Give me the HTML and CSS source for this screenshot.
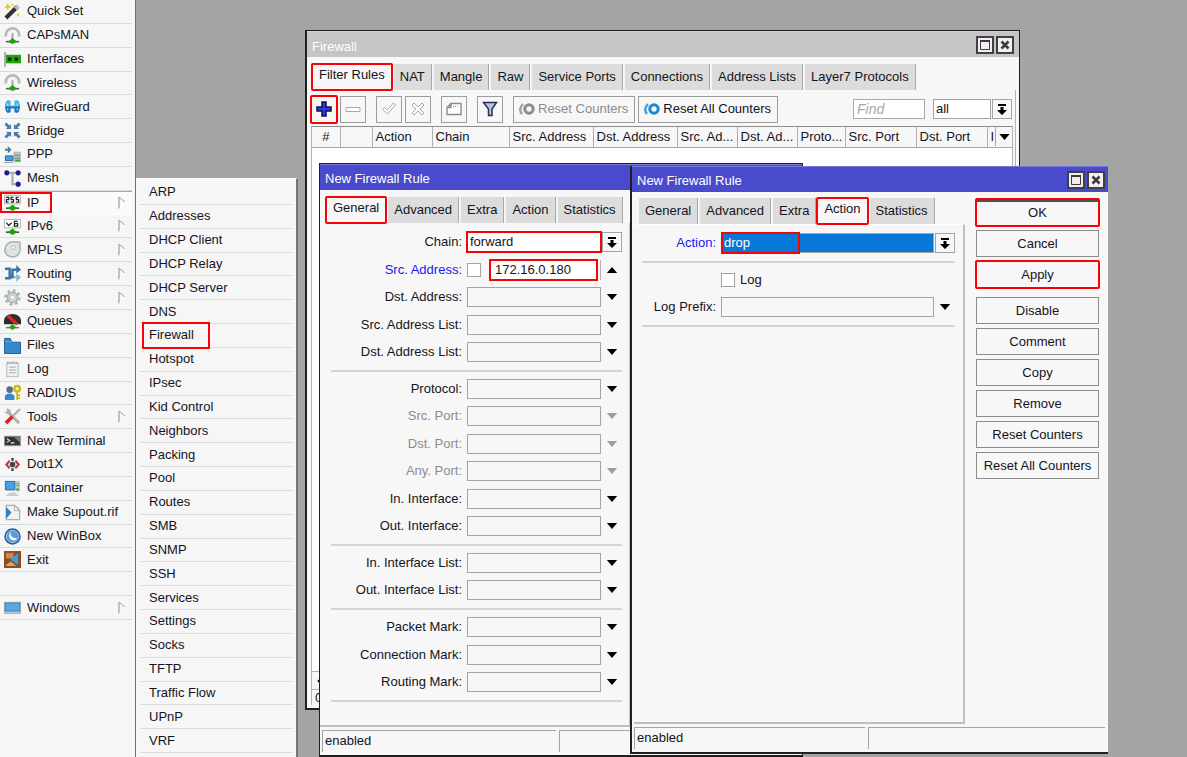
FILE: index.html
```html
<!DOCTYPE html>
<html lang="en">
<head>
<meta charset="utf-8">
<title>WinBox</title>
<link rel="stylesheet" href="styles.css">
</head>
<body>
<svg class="defs" aria-hidden="true">
  <symbol id="sub" viewBox="0 0 8 14"><path d="M1 13V1" stroke="#8c8c8c" fill="none"/><path d="M1 1l6 5" stroke="#a0a0a0" fill="none"/><path d="M7 6l-6 7" stroke="#fff" fill="none"/></symbol>
  <symbol id="down" viewBox="0 0 12 7"><path d="M0 0h12L6 7z" fill="currentColor"/></symbol>
  <symbol id="up" viewBox="0 0 12 7"><path d="M0 7h12L6 0z" fill="currentColor"/></symbol>
  <symbol id="pick" viewBox="0 0 10 11"><path d="M1 0h8v2H1zM3.500 3h3v3H10L5 11 0 6h3.500z" fill="currentColor"/></symbol>
  <symbol id="max" viewBox="0 0 10 10"><path d="M.5 1h9v8.500h-9z" fill="#f4ecf4" stroke="#3c3c3c"/><path d="M0 1h10" stroke="#3c3c3c" stroke-width="2"/></symbol>
  <symbol id="close" viewBox="0 0 10 10"><path d="M1.500 1.500l7 7M8.500 1.500l-7 7" stroke="#3c3c3c" stroke-width="2.600"/></symbol>
  <symbol id="antenna" viewBox="0 0 18 18"><path d="M2 10V8a7 6.500 0 0 1 14 0v2" fill="none" stroke="#b4bcb8" stroke-width="2.800"/><path d="M8 6h2l.5 8h-3z" fill="#a9b4ae"/><path d="M2 15.500h14" stroke="#555" stroke-width="1.600"/><path d="M9 12l5 3.500-5 2.500-5-2.500z" fill="#22a010"/></symbol>
  <symbol id="rings" viewBox="0 0 16 12"><path d="M4 1Q-1 6 3 11" fill="none" stroke="currentColor" stroke-width="2.400" opacity=".8"/><circle cx="10" cy="6" r="4.200" fill="none" stroke="currentColor" stroke-width="3"/></symbol>
</svg>

<nav class="sidebar" aria-label="Main menu">
  <ul class="menu">
    <li><a href="#"><svg viewBox="0 0 18 18"><path d="M2 16L14 4" stroke="#333" stroke-width="4.500"/><path d="M12 6l3-3" stroke="#b8bcbc" stroke-width="4"/><path d="M4 1v6M1 4h6M9 1v2M15 11v3" stroke="#d8cc10" stroke-width="1.800"/></svg>Quick Set</a></li>
    <li><a href="#"><svg><use href="#antenna"/></svg>CAPsMAN</a></li>
    <li><a href="#"><svg viewBox="0 0 18 18"><path d="M1 1v16" stroke="#a9b4ae" stroke-width="2"/><path d="M2 4h16v9H2z" fill="#22a010"/><path d="M4.500 7l3 3M7.500 7l-3 3M11.500 7l3 3M14.500 7l-3 3" stroke="#0c2c08" stroke-width="1.800"/><path d="M4 13.500h13" stroke="#d8cc10" stroke-dasharray="1 1"/></svg>Interfaces</a></li>
    <li><a href="#"><svg><use href="#antenna"/></svg>Wireless</a></li>
    <li><a href="#"><svg viewBox="0 0 18 18"><path d="M1 8l1-4 2-2 3 1v5h4V3l3-1 2 2 1 4v2H1z" fill="#48b8f0"/><path d="M1 9h16l-1 5-2 2-3-1v-4H7v4l-3 1-2-2z" fill="#2070bc"/><path d="M4 6v2M14 6v2M4 11v2M14 11v2" stroke="#d8ecfa" stroke-width="1.200"/></svg>WireGuard</a></li>
    <li><a href="#"><svg viewBox="0 0 18 18"><path d="M1.500 1.500L6 6M16.500 1.500L12 6M1.500 16.500L6 12M16.500 16.500L12 12" stroke="#4c7ca4" stroke-width="3"/><path d="M7.500 2v5.500H2zM10.500 2v5.500H16zM7.500 16v-5.500H2zM10.500 16v-5.500H16z" fill="#4c7ca4"/></svg>Bridge</a></li>
    <li><a href="#"><svg viewBox="0 0 18 18"><path d="M1 3h3V0l4 4-4 4V5H1z" fill="#4c7ca4"/><path d="M10 6h8v11h-8z" fill="#b8bebc"/><path d="M11 10h6M11 13h6" stroke="#7d8784"/><path d="M1.500 10.500h8v5h-8z" fill="#40a0e0" stroke="#286494"/><path d="M12 15.500h5" stroke="#30b020" stroke-width="2"/><path d="M0 17.500h10" stroke="#9aa2a0"/></svg>PPP</a></li>
    <li><a href="#"><svg viewBox="0 0 18 18"><path d="M3 3h12M9 3v12h6" fill="none" stroke="#a9b4ae" stroke-width="2.400"/><g fill="#201c90"><circle cx="3" cy="3" r="2.700"/><circle cx="15" cy="3" r="2.700"/><circle cx="15" cy="15" r="2.700"/></g></svg>Mesh</a></li>
    <li class="open"><a href="#"><svg viewBox="0 0 18 18"><path d="M.5 1.500h17v9H.5z" fill="#fff" stroke="#a9b4ae"/><path d="M2 3.500h3v2.500H2.500v2.500H5M10 3.500H7.500V6H10v2.500H7M15.500 3.500H13V6h2.500v2.500h-3" fill="none" stroke="#222" stroke-width="1.300"/><path d="M2 15h14" stroke="#444" stroke-width="1.600"/><path d="M9 11l5 4-5 3-5-3z" fill="#22a010"/></svg>IP<svg class="sub"><use href="#sub"/></svg></a></li>
    <li><a href="#"><svg viewBox="0 0 18 18"><path d="M.5 1.500h17v9H.5z" fill="#fff" stroke="#a9b4ae"/><path d="M2.500 5l2.500 3 3-3M14.500 3.500H11v5h3.500V6H11" fill="none" stroke="#222" stroke-width="1.300"/><path d="M2 15h14" stroke="#444" stroke-width="1.600"/><path d="M9 11l5 4-5 3-5-3z" fill="#22a010"/></svg>IPv6<svg class="sub"><use href="#sub"/></svg></a></li>
    <li><a href="#"><svg viewBox="0 0 18 18"><path d="M7 1h9q1 0 1 1v8q-2 7-8 7-8-1-8-8 1-6 6-8z" fill="#dfe4e2" stroke="#a9b4ae" stroke-width="1.600"/><circle cx="10" cy="7" r="2" fill="#fff" stroke="#a9b4ae"/></svg>MPLS<svg class="sub"><use href="#sub"/></svg></a></li>
    <li><a href="#"><svg viewBox="0 0 18 18"><path d="M6 8l5 5h3" fill="none" stroke="#8cb8d8" stroke-width="2"/><path d="M1 4h5v10H1M6 13h3V5h5" fill="none" stroke="#3c74a8" stroke-width="2.600"/><path d="M13 0l5 5-5 4z" fill="#3c74a8"/><path d="M13 9l5 4-5 5z" fill="#8cb8d8"/></svg>Routing<svg class="sub"><use href="#sub"/></svg></a></li>
    <li><a href="#"><svg viewBox="0 0 18 18"><circle cx="9" cy="9" r="7.500" fill="none" stroke="#a9b4ae" stroke-width="2.400" stroke-dasharray="3 2.890"/><circle cx="9" cy="9" r="5.400" fill="#dfe4e2" stroke="#a9b4ae" stroke-width="2"/><circle cx="9" cy="9" r="2.800" fill="#f8f8f8" stroke="#a9b4ae"/></svg>System<svg class="sub"><use href="#sub"/></svg></a></li>
    <li><a href="#"><svg viewBox="0 0 18 18"><path d="M0 12V8q1-7 9-7t9 7v4z" fill="#2c2c2c"/><path d="M4 3l10 9" stroke="#d82828" stroke-width="3.500"/><path d="M2 15.500h14" stroke="#777" stroke-width="1.600"/><path d="M9 12l4 3-4 3-4-3z" fill="#22a010"/></svg>Queues</a></li>
    <li><a href="#"><svg viewBox="0 0 18 18"><path d="M.5 1.500h6l2 4h9v12H.5z" fill="#3488cc" stroke="#245c90"/><path d="M1 5h7" stroke="#6cb0e4"/></svg>Files</a></li>
    <li><a href="#"><svg viewBox="0 0 18 18"><path d="M3 2h12v15l-2-1-2 1-2-1-2 1-2-1-2 1z" fill="#f2f4f3" stroke="#a9b4ae"/><path d="M3 2h12" stroke="#a9b4ae" stroke-width="2.400" stroke-dasharray="2 1"/><path d="M5.500 6.500h7M5.500 9.500h7M5.500 12.500h7" stroke="#98a49e"/></svg>Log</a></li>
    <li><a href="#"><svg viewBox="0 0 18 18"><circle cx="6" cy="6" r="3.500" fill="#54708c"/><path d="M1 17v-4q1-3 5-3t5 3v4z" fill="#3888cc"/><circle cx="14" cy="5" r="3" fill="#f4ecc0" stroke="#ccb810" stroke-width="2.400"/><path d="M14 8v9M14 12h3M14 15h3" stroke="#ccb810" stroke-width="2"/></svg>RADIUS</a></li>
    <li><a href="#"><svg viewBox="0 0 18 18"><path d="M4 4l12 12" stroke="#a9b4ae" stroke-width="3.200"/><path d="M0 4h3V0l4 2v3L4 7z" fill="#a9b4ae"/><path d="M17 1l-8 8" stroke="#a9b4ae" stroke-width="2.400"/><path d="M9 9l-7 7" stroke="#cc2c2c" stroke-width="3.800"/></svg>Tools<svg class="sub"><use href="#sub"/></svg></a></li>
    <li><a href="#"><svg viewBox="0 0 18 18"><path d="M.5 4.500h17v10H.5z" fill="#333" stroke="#999"/><path d="M3 7l3 2-3 2M7 11.500h4" fill="none" stroke="#eee" stroke-width="1.200"/><path d="M10 5h7v6z" fill="#777"/></svg>New Terminal</a></li>
    <li><a href="#"><svg viewBox="0 0 18 18"><path d="M9 2v3M9 13v3" stroke="#444" stroke-width="2.600"/><circle cx="9" cy="9" r="3" fill="#444"/><path d="M6 5L2.500 9 6 13M12 5l3.500 4-3.500 4" fill="none" stroke="#c83434" stroke-width="2.200"/></svg>Dot1X</a></li>
    <li><a href="#"><svg viewBox="0 0 18 18"><path d="M12 1h5v11h-5z" fill="#c4caca"/><path d="M13 4h3M13 6h3" stroke="#7d8784"/><path d="M13 10h3" stroke="#30b020" stroke-width="2"/><path d="M1.500 1.500h10v9h-10z" fill="#48a0e4" stroke="#286494"/><path d="M4 15q5-4 10 0l2 2H2z" fill="#c8cecc"/></svg>Container</a></li>
    <li><a href="#"><svg viewBox="0 0 18 18"><path d="M2.500 1.500h9l5 5v10h-14z" fill="#f2f4f3" stroke="#a9b4ae" stroke-width="1.400"/><path d="M11 1v6h6" fill="none" stroke="#a9b4ae"/><path d="M2 3l6 6-6 7z" fill="#2c84c8"/></svg>Make Supout.rif</a></li>
    <li><a href="#"><svg viewBox="0 0 18 18"><circle cx="9" cy="9" r="8.700" fill="#2464a8"/><circle cx="9" cy="9" r="6.500" fill="#5c9cd8" stroke="#a8ccec"/><path d="M7 4q-1 7 7 7-3 4-7 1-3-4 0-8z" fill="#fff"/></svg>New WinBox</a></li>
    <li><a href="#"><svg viewBox="0 0 18 18"><path d="M0 0h18v18H0z" fill="#8c4c24"/><path d="M2 2h8v6H2z" fill="#c88850"/><path d="M2 15l5-4 6 5H2z" fill="#dca868"/><path d="M15 2v13L7 9z" fill="#38a0e0"/></svg>Exit</a></li>
    <li></li>
    <li><a href="#"><svg viewBox="0 0 18 18"><path d="M.5 3.500h17v10H.5z" fill="#3c94dc" stroke="#8c9c9c"/><path d="M2 5h14v7H2z" fill="#58a8e8"/><path d="M0 15h18" stroke="#b4bcba" stroke-width="2"/></svg>Windows<svg class="sub"><use href="#sub"/></svg></a></li>
  </ul>
</nav>

<main class="desktop">
  <nav class="submenu" aria-label="IP">
    <ul class="menu menu-ip">
      <li><a href="#">ARP</a></li>
      <li><a href="#">Addresses</a></li>
      <li><a href="#">DHCP Client</a></li>
      <li><a href="#">DHCP Relay</a></li>
      <li><a href="#">DHCP Server</a></li>
      <li><a href="#">DNS</a></li>
      <li class="marked"><a href="#">Firewall</a></li>
      <li><a href="#">Hotspot</a></li>
      <li><a href="#">IPsec</a></li>
      <li><a href="#">Kid Control</a></li>
      <li><a href="#">Neighbors</a></li>
      <li><a href="#">Packing</a></li>
      <li><a href="#">Pool</a></li>
      <li><a href="#">Routes</a></li>
      <li><a href="#">SMB</a></li>
      <li><a href="#">SNMP</a></li>
      <li><a href="#">SSH</a></li>
      <li><a href="#">Services</a></li>
      <li><a href="#">Settings</a></li>
      <li><a href="#">Socks</a></li>
      <li><a href="#">TFTP</a></li>
      <li><a href="#">Traffic Flow</a></li>
      <li><a href="#">UPnP</a></li>
      <li><a href="#">VRF</a></li>
    </ul>
  </nav>

  <section class="window firewall" aria-label="Firewall">
    <header class="title inactive"><h2>Firewall</h2>
      <button aria-label="Maximize"><svg><use href="#max"/></svg></button><button aria-label="Close"><svg><use href="#close"/></svg></button></header>
    <div class="tabs">
      <button class="tab active mark">Filter Rules</button><button class="tab">NAT</button><button class="tab">Mangle</button><button class="tab">Raw</button><button class="tab">Service Ports</button><button class="tab">Connections</button><button class="tab">Address Lists</button><button class="tab">Layer7 Protocols</button>
    </div>
    <div class="pane">
      <div class="toolbar">
        <button class="tool mark" aria-label="Add"><svg viewBox="0 0 16 16"><path d="M6 1h4v5h5v4h-5v5H6v-5H1V6h5z" fill="#2838f0" stroke="#101040" stroke-width="1.500"/></svg></button>
        <button class="tool" aria-label="Remove"><svg viewBox="0 0 16 16"><path d="M1 6.500h14v4H1z" fill="#fff" stroke="#a8a8a8"/></svg></button>
        <button class="tool apart" aria-label="Enable"><svg viewBox="0 0 16 16"><path d="M1.500 8.500l2-2L6.500 9l6-7 2 2-8 9z" fill="#fff" stroke="#a8a8a8"/></svg></button>
        <button class="tool" aria-label="Disable"><svg viewBox="0 0 16 16"><path d="M2 4l2-2 4 4 4-4 2 2-4 4 4 4-2 2-4-4-4 4-2-2 4-4z" fill="#fff" stroke="#a8a8a8"/></svg></button>
        <button class="tool apart" aria-label="Comment"><svg viewBox="0 0 16 16"><path d="M5 2.500h10v11H1v-7h4zM1 6.500l4-4" fill="#fff" stroke="#8c8c8c" stroke-width="1.400"/><path d="M7 5.500h6" stroke="#8c8c8c" stroke-dasharray="1 1"/></svg></button>
        <button class="tool apart" aria-label="Filter"><svg viewBox="0 0 16 16"><path d="M1.500 1.500h13L10 8v6.500H6.500V8z" fill="#b4c4e8" stroke="#28304c" stroke-width="1.500"/></svg></button>
        <button class="tool text apart" disabled><svg><use href="#rings"/></svg>Reset Counters</button>
        <button class="tool text"><svg><use href="#rings"/></svg>Reset All Counters</button>
        <input class="find" type="text" placeholder="Find" aria-label="Find">
        <select class="field all" aria-label="Rule set"><option>all</option></select>
        <button class="pick" aria-label="Show sets"><svg><use href="#pick"/></svg></button>
      </div>
      <div class="list">
        <table>
          <colgroup><col class="c-num"><col class="c-flag"><col class="c-60"><col class="c-chain"><col class="c-addr"><col class="c-addr"><col class="c-60"><col class="c-60"><col class="c-proto"><col class="c-port"><col class="c-port"><col></colgroup>
          <thead><tr><th>#</th><th></th><th>Action</th><th>Chain</th><th>Src. Address</th><th>Dst. Address</th><th>Src. Ad...</th><th>Dst. Ad...</th><th>Proto...</th><th>Src. Port</th><th>Dst. Port</th><th class="last"><div><span>I</span><button aria-label="Columns"><svg><use href="#down"/></svg></button></div></th></tr></thead>
        </table>
        <div class="scroll"><svg viewBox="0 0 7 12"><path d="M7 0v12L0 6z"/></svg></div>
      </div>
      <div class="count">0</div>
    </div>
  </section>

  <section class="window rule general" aria-label="New Firewall Rule, General">
    <header class="title"><h2>New Firewall Rule</h2></header>
    <div class="tabs">
      <button class="tab active mark">General</button><button class="tab">Advanced</button><button class="tab">Extra</button><button class="tab">Action</button><button class="tab">Statistics</button>
    </div>
    <div class="body">
      <form class="panel">
        <div class="group g5">
          <div class="row"><label for="chain">Chain:</label><select class="field mark" id="chain"><option>forward</option></select><button type="button" class="pick" aria-label="Pick chain"><svg><use href="#pick"/></svg></button></div>
          <div class="row"><label class="set" for="src">Src. Address:</label><span class="pair"><input type="checkbox" aria-label="Not"><input class="field mark" id="src" type="text" value="172.16.0.180"></span><button type="button" class="arrow" aria-label="Collapse"><svg><use href="#up"/></svg></button></div>
          <div class="row"><label for="dst">Dst. Address:</label><input class="field" id="dst" type="text"><button type="button" class="arrow" aria-label="Expand"><svg><use href="#down"/></svg></button></div>
          <div class="row"><label for="srcl">Src. Address List:</label><input class="field" id="srcl" type="text"><button type="button" class="arrow" aria-label="Expand"><svg><use href="#down"/></svg></button></div>
          <div class="row"><label for="dstl">Dst. Address List:</label><input class="field" id="dstl" type="text"><button type="button" class="arrow" aria-label="Expand"><svg><use href="#down"/></svg></button></div>
        </div>
        <div class="group g6">
          <div class="row"><label for="proto">Protocol:</label><input class="field" id="proto" type="text"><button type="button" class="arrow" aria-label="Expand"><svg><use href="#down"/></svg></button></div>
          <div class="row off"><label for="sport">Src. Port:</label><input class="field" id="sport" type="text" disabled><button type="button" class="arrow" disabled aria-label="Expand"><svg><use href="#down"/></svg></button></div>
          <div class="row off"><label for="dport">Dst. Port:</label><input class="field" id="dport" type="text" disabled><button type="button" class="arrow" disabled aria-label="Expand"><svg><use href="#down"/></svg></button></div>
          <div class="row off"><label for="aport">Any. Port:</label><input class="field" id="aport" type="text" disabled><button type="button" class="arrow" disabled aria-label="Expand"><svg><use href="#down"/></svg></button></div>
          <div class="row"><label for="inif">In. Interface:</label><input class="field" id="inif" type="text"><button type="button" class="arrow" aria-label="Expand"><svg><use href="#down"/></svg></button></div>
          <div class="row"><label for="outif">Out. Interface:</label><input class="field" id="outif" type="text"><button type="button" class="arrow" aria-label="Expand"><svg><use href="#down"/></svg></button></div>
        </div>
        <div class="group g2">
          <div class="row"><label for="inl">In. Interface List:</label><input class="field" id="inl" type="text"><button type="button" class="arrow" aria-label="Expand"><svg><use href="#down"/></svg></button></div>
          <div class="row"><label for="outl">Out. Interface List:</label><input class="field" id="outl" type="text"><button type="button" class="arrow" aria-label="Expand"><svg><use href="#down"/></svg></button></div>
        </div>
        <div class="group g3">
          <div class="row"><label for="pm">Packet Mark:</label><input class="field" id="pm" type="text"><button type="button" class="arrow" aria-label="Expand"><svg><use href="#down"/></svg></button></div>
          <div class="row"><label for="cm">Connection Mark:</label><input class="field" id="cm" type="text"><button type="button" class="arrow" aria-label="Expand"><svg><use href="#down"/></svg></button></div>
          <div class="row"><label for="rm">Routing Mark:</label><input class="field" id="rm" type="text"><button type="button" class="arrow" aria-label="Expand"><svg><use href="#down"/></svg></button></div>
        </div>
      </form>
      <div class="side"></div>
    </div>
    <footer class="status"><span>enabled</span><span></span></footer>
  </section>

  <section class="window rule action" aria-label="New Firewall Rule, Action">
    <header class="title"><h2>New Firewall Rule</h2>
      <button aria-label="Maximize"><svg><use href="#max"/></svg></button><button aria-label="Close"><svg><use href="#close"/></svg></button></header>
    <div class="body">
      <div class="main">
        <div class="tabs">
          <button class="tab">General</button><button class="tab">Advanced</button><button class="tab">Extra</button><button class="tab active mark">Action</button><button class="tab">Statistics</button>
        </div>
        <form class="panel">
          <div class="group">
            <div class="row"><label class="set" for="action">Action:</label><span class="chosen"><select class="field" id="action"><option>drop</option></select></span><button type="button" class="pick" aria-label="Pick action"><svg><use href="#pick"/></svg></button></div>
          </div>
          <div class="group">
            <div class="row"><label class="check"><input type="checkbox">Log</label></div>
            <div class="row"><label for="prefix">Log Prefix:</label><input class="field" id="prefix" type="text"><button type="button" class="arrow" aria-label="Expand"><svg><use href="#down"/></svg></button></div>
          </div>
        </form>
      </div>
      <div class="side">
        <button class="cmd ok mark">OK</button>
        <button class="cmd">Cancel</button>
        <button class="cmd mark">Apply</button>
        <button class="cmd apart">Disable</button>
        <button class="cmd">Comment</button>
        <button class="cmd">Copy</button>
        <button class="cmd">Remove</button>
        <button class="cmd">Reset Counters</button>
        <button class="cmd">Reset All Counters</button>
      </div>
    </div>
    <footer class="status"><span>enabled</span><span></span></footer>
  </section>
</main>
</body>
</html>
```
FILE: styles.css
```css
*, *::before, *::after { box-sizing: border-box; }

body {
  margin: 0;
  display: flex;
  height: 100vh;
  overflow: hidden;
  background: #a4a4a4;
  color: #14141c;
  font: 13px/16px "Liberation Sans", Arial, sans-serif;
}

button, input, select { font: inherit; color: inherit; margin: 0; }
button { padding: 0; cursor: default; }
.defs { position: absolute; width: 0; height: 0; }
.mark { outline: 2px solid #fc0008; border-radius: 1px; }

/* Menus */
.sidebar {
  flex: none;
  width: 136px;
  padding-right: 3px;
  background: #f6f6f6;
  border-right: 1px solid #707070;
}
.menu {
  list-style: none;
  margin: 0;
  padding: 0;
  display: grid;
  grid-template-rows: repeat(26, 1fr);
  height: 620px;
}
.menu li { border-bottom: 1px solid #dadada; display: flex; }
.menu a {
  flex: 1;
  display: flex;
  align-items: center;
  gap: 6px;
  padding-left: 4px;
  color: inherit;
  text-decoration: none;
  white-space: nowrap;
}
.menu svg { width: 17px; height: 17px; flex: none; }
.menu svg.sub { width: 8px; height: 14px; margin: 0 6px 0 auto; }
.menu .open {
  position: relative;
  background: #fafafa;
  border-top: 1px solid #a8a8a8;
  border-bottom-color: #fff;
}
.menu .open::after {
  content: "";
  position: absolute;
  inset: 0 auto 1px 0;
  width: 52px;
  border: 2px solid #fc0008;
}

.desktop { flex: 1; position: relative; }

.submenu {
  position: absolute;
  left: 0;
  top: 178px;
  bottom: 0;
  width: 162px;
  padding: 2px 3px 0 4px;
  overflow: hidden;
  background: #f6f6f6;
  border-top: 1px solid #fff;
  border-right: 2px solid #747474;
}
.menu-ip { grid-template-rows: repeat(24, 1fr); height: 572px; }
.menu-ip a { padding-left: 9px; }
.menu-ip .marked a {
  flex: none;
  width: 68px;
  margin: -2px 0 -2px 2px;
  padding-left: 5px;
  border: 2px solid #fc0008;
}

/* Windows */
.window {
  position: absolute;
  display: flex;
  flex-direction: column;
  background: #f7f7f7;
  border: 1px solid #202020;
}
.firewall { left: 169px; top: 30px; width: 715px; height: 680px; border-width: 1px 1px 2px 2px; }
.general { left: 183px; top: 163px; width: 484px; height: 594px; border-bottom-width: 2px; }
.action { left: 494px; top: 166px; width: 478px; height: 588px; border-width: 0 0 2px 2px; }

.title {
  display: flex;
  align-items: center;
  gap: 2px;
  height: 26px;
  padding: 0 3px 0 5px;
  background: #4a4acc;
  border-top: 1px solid #7878dc;
  color: #fff;
}
.title h2 { flex: 1; margin: 0; padding-top: 2px; font: inherit; }
.title.inactive { background: #c5c5c5; border-color: #d0d0d0; padding-right: 5px; }
.inactive h2 { padding-top: 4px; }
.title button {
  display: grid;
  place-items: center;
  width: 18px;
  height: 18px;
  background: #f4ecf4;
  border: 2px solid #404040;
}
.title svg { width: 10px; height: 10px; }

.tabs { display: flex; gap: 1px; padding: 7px 0 0 6px; align-items: flex-end; }
.tab {
  height: 26px;
  padding: 0 6px;
  background: #dcdcdc;
  border: 0;
  border-right: 1px solid #a8a8a8;
  border-left: 1px solid #f4f4f4;
  white-space: nowrap;
}
.tab.active { position: relative; background: #f7f7f7; border-color: transparent; padding-bottom: 4px; outline-offset: -1px; }
.firewall .tabs { padding-left: 5px; }

/* Firewall list */
.pane { flex: 1; display: flex; flex-direction: column; margin-right: 3px; padding: 5px 2px 3px 4px; border-right: 1px solid #b4b4b4; }
.toolbar { display: flex; align-items: center; gap: 3px; height: 28px; padding-right: 1px; }
.tool {
  flex: none;
  display: flex;
  align-items: center;
  justify-content: center;
  gap: 3px;
  width: 26px;
  height: 27px;
  background: #f7f7f7;
  border: 1px solid #9c9c9c;
  white-space: nowrap;
}
.tool.mark { outline-offset: -1px; border-color: #fc0008; }
.tool.apart { margin-left: 7px; }
.tool svg { width: 16px; height: 16px; }
.tool.text { width: auto; padding: 0 6px 0 5px; }
.tool.text svg { height: 12px; color: #1c88d0; }
.tool:disabled, .tool.text:disabled svg { color: #8c8c8c; }
.find { width: 72px; height: 20px; margin-left: auto; padding: 0 3px; background: #fff; border: 1px solid #a8a8a8; font-style: italic; font-size: 14px; }
.find::placeholder { color: #a8a8a8; }
.field.all { width: 58px; margin-left: 5px; margin-right: -2px; background: #fff; }

.list { flex: 1; display: flex; flex-direction: column; margin-top: 3px; background: #fff; border: 1px solid #b4b4b4; border-top-color: #8c8c8c; }
table { width: 100%; table-layout: fixed; border-collapse: collapse; background: #f7f7f7; }
th { height: 20px; padding: 1px 0 0 3px; border-right: 1px solid #b0b0b0; border-bottom: 1px solid #a8a8a8; font-weight: normal; text-align: left; white-space: nowrap; }
th:first-child { text-align: center; padding: 1px 0 0; }
.c-num { width: 28px; } .c-flag { width: 32px; } .c-60 { width: 60px; } .c-chain { width: 77px; }
.c-addr { width: 84px; } .c-proto { width: 48px; } .c-port { width: 71px; }
th.last { padding: 0 0 0 3px; border-right: 0; }
.last div { display: flex; align-items: center; justify-content: space-between; }
.last button { display: grid; place-items: center; width: 17px; height: 19px; background: #f7f7f7; border: 0; border-left: 1px solid #a8a8a8; color: #000; }
.last svg { width: 11px; height: 6px; }
.scroll { display: flex; align-items: center; margin-top: auto; height: 18px; padding-left: 5px; background: #f7f7f7; border-top: 1px solid #b4b4b4; }
.scroll svg { width: 5px; height: 8px; }
.count { height: 15px; padding-left: 3px; border-left: 1px solid #b4b4b4; }

/* Rule dialogs */
.body { flex: 1; display: flex; }
.main { flex: 1; display: flex; flex-direction: column; }
.panel {
  flex: 1;
  padding: 0 7px 0 11px;
  border-right: 2px solid #c0c0c0;
  border-bottom: 2px solid #c0c0c0;
}
.general .side { width: 171px; border-bottom: 2px solid #c0c0c0; }
.group {
  display: flex;
  flex-direction: column;
  justify-content: space-between;
  padding: 7px 0 8px;
  border-bottom: 2px solid #d4d4d4;
}
.g5 { height: 149px; }
.g6 { height: 174px; }
.g2 { height: 64px; }
.g3 { height: 92px; }
.row { display: grid; grid-template-columns: 135px 1fr 20px; column-gap: 1px; align-items: center; height: 20px; }
.general .g5 { padding-top: 9px; }
.action .row { grid-template-columns: 78px 1fr 20px; }
.row label { padding-right: 4px; text-align: right; white-space: nowrap; }
.row .set { color: #1818f0; }
.off label { color: #8c8c8c; }
.field {
  appearance: none;
  width: 100%;
  min-width: 0;
  height: 20px;
  padding: 0 2px;
  background: #f7f7f7;
  border: 1px solid #a4a4a4;
  border-radius: 0;
}
.field.mark { background: #fff; outline-offset: -1px; border-color: #fc0008; }
.pair { display: flex; align-items: center; gap: 9px; padding-right: 3px; border-right: 1px solid #b4b4b4; }
.pair .field { padding-left: 4px; }
input[type="checkbox"] { appearance: none; flex: none; width: 14px; height: 14px; background: #fff; border: 1px solid #a4a4a4; }
.pick, .arrow { display: grid; place-items: center; width: 20px; height: 20px; background: #f7f7f7; border: 1px solid #a4a4a4; color: #000; }
.pick svg { width: 10px; height: 11px; }
.arrow { border-color: transparent; }
.arrow svg { width: 12px; height: 6px; }
.arrow:disabled { color: #98a098; }

.action .tabs { padding-top: 6px; }
.action .panel { margin-left: 2px; padding: 0 8px; border-top: 1px solid #fff; }
.action .group { gap: 7px; padding: 7px 0 8px; }
.action .group:first-child { padding-top: 8px; }
.row .check { grid-column: 2 / -1; display: flex; gap: 5px; align-items: center; }
.chosen { position: relative; display: flex; }
.chosen .field { background: #0878d8; color: #fff; border-color: #a4a4a4; }
.chosen::after { content: ""; position: absolute; inset: -1px auto -1px 0; width: 79px; border: 2px solid #fc0008; }
.action .side { display: flex; flex-direction: column; gap: 4px; width: 143px; padding: 7px 9px 0 11px; }
.cmd { height: 27px; background: #f7f7f7; border: 1px solid #8c8c8c; }
.cmd.mark { outline-offset: -1px; }
.cmd.ok { border-top: 3px solid #505050; padding-bottom: 2px; }
.cmd.apart { margin-top: 5px; }

.status { display: flex; gap: 3px; height: 28px; padding: 3px 3px 3px 2px; }
.status span { flex: 1; padding: 2px 2px 0; border-top: 1px solid #a4a4a4; border-left: 1px solid #a4a4a4; }
.status span:first-child { flex: 0 0 49%; }
```
